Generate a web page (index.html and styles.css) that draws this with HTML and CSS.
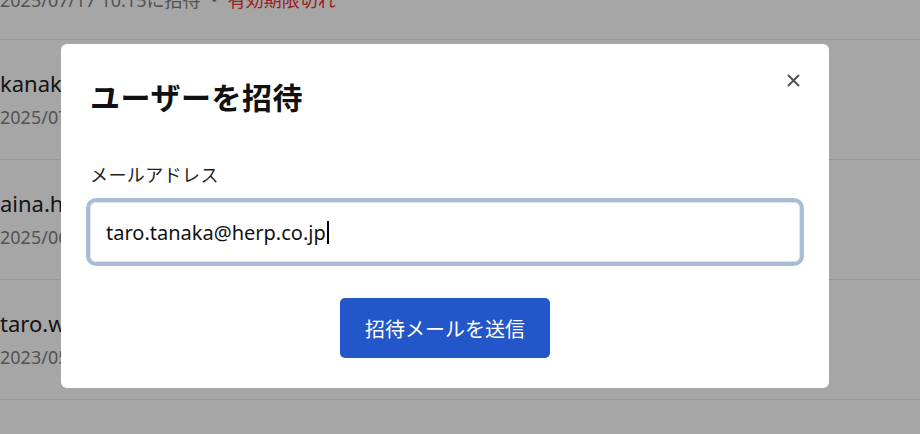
FILE: index.html
```html
<!DOCTYPE html>
<html lang="ja">
<head>
    <meta charset="UTF-8">
    <meta name="viewport" content="width=device-width, initial-scale=1.0">
    <title>ユーザーを招待</title>
    <link rel="stylesheet" href="styles.css">
</head>
<body>

    <ul class="user-list">
        <li class="user-row">
            <p class="user-meta">2025/07/17 10:15に招待 ・ <span class="expired">有効期限切れ</span></p>
        </li>
        <li class="user-row">
            <p class="user-email">kanako.suzuki@herp.co.jp</p>
            <p class="user-meta">2025/07/10 14:02に招待</p>
        </li>
        <li class="user-row">
            <p class="user-email">aina.hayashi@herp.co.jp</p>
            <p class="user-meta">2025/06/28 09:41に招待</p>
        </li>
        <li class="user-row">
            <p class="user-email">taro.watanabe@herp.co.jp</p>
            <p class="user-meta">2023/05/12 18:30に招待</p>
        </li>
    </ul>

    <div class="overlay">
        <div class="modal">
            <button class="btn-close" aria-label="閉じる">
                <svg width="13" height="13" viewBox="0 0 13 13">
                    <path d="M1.5 1.5 L11.5 11.5 M11.5 1.5 L1.5 11.5" stroke="#555" stroke-width="2" stroke-linecap="round"/>
                </svg>
            </button>

            <h2 class="modal-title">ユーザーを招待</h2>

            <label class="field-label">メールアドレス</label>
            <div class="field-input">
                <span>taro.tanaka@herp.co.jp</span><span class="caret"></span>
            </div>

            <div class="modal-actions">
                <button class="btn-primary">招待メールを送信</button>
            </div>
        </div>
    </div>

</body>
</html>
```

FILE: styles.css
```css
body {
    font-family: 'Noto Sans', 'Noto Sans CJK JP', sans-serif;
    background: #fff;
    color: #222;
    margin: 0;
    padding: 0;
    height: 100vh;
    overflow: hidden;
}

.user-list {
    list-style: none;
    margin: -12px 0 0 0;
    padding: 0;
}

.user-row {
    height: 120px;
    box-sizing: border-box;
    border-bottom: 1px solid #e6e6e6;
    padding-top: 28px;
}

.user-row:first-child {
    height: 52px;
    padding-top: 0;
}

.user-row p {
    margin: 0;
}

.user-email {
    font-size: 22px;
    line-height: 30px;
    margin-bottom: 7px !important;
}

.user-meta {
    font-size: 18px;
    line-height: 24px;
    color: #808080;
}

.expired {
    color: #f23030;
}

.overlay {
    position: fixed;
    inset: 0;
    background: rgba(0, 0, 0, 0.35);
    display: flex;
    justify-content: center;
    align-items: center;
    padding-right: 30px;
    padding-bottom: 2px;
}

.modal {
    position: relative;
    background: #fff;
    width: 768px;
    box-sizing: border-box;
    border-radius: 6px;
    padding: 36px 29px 30px;
    display: flex;
    flex-direction: column;
}

.btn-close {
    position: absolute;
    top: 22px;
    right: 22px;
    width: 28px;
    height: 28px;
    border: none;
    background: none;
    padding: 0;
    display: flex;
    align-items: center;
    justify-content: center;
    cursor: pointer;
}

.modal-title {
    font-size: 30px;
    line-height: 36px;
    font-weight: 700;
    color: #111;
    margin: 0 0 46px 0;
    letter-spacing: 0.5px;
}

.field-label {
    font-size: 18px;
    line-height: 27px;
    color: #222;
    margin: 0 0 13px 0;
    letter-spacing: 0.4px;
}

.field-input {
    height: 60px;
    box-sizing: border-box;
    border: 1px solid #e1e5ec;
    border-radius: 6px;
    box-shadow: 0 0 0 4px #a9bcd6;
    padding: 0 15px;
    display: flex;
    align-items: center;
    font-size: 20px;
    color: #111;
}

.caret {
    display: inline-block;
    width: 2px;
    height: 23px;
    background: #000;
    margin-left: 1px;
}

.modal-actions {
    display: flex;
    justify-content: center;
    margin-top: 36px;
}

.btn-primary {
    width: 210px;
    height: 60px;
    background-color: #2356c8;
    color: #fff;
    border: none;
    border-radius: 5px;
    font-family: 'Noto Sans', 'Noto Sans CJK JP', sans-serif;
    font-size: 20px;
    cursor: pointer;
}
```
